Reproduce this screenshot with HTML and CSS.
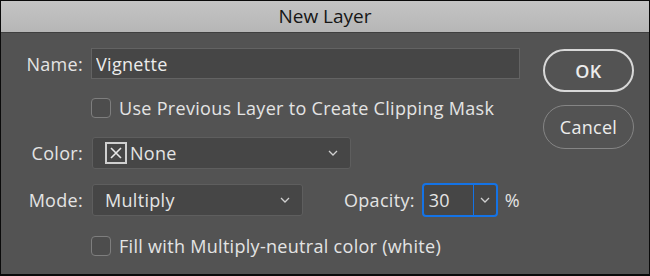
FILE: index.html
```html
<!DOCTYPE html>
<html lang="en">
<head>
    <meta charset="UTF-8">
    <title>New Layer</title>
    <link rel="stylesheet" href="styles.css">
</head>
<body>
    <div class="dialog">
        <div class="titlebar">New Layer</div>
        <div class="content">
            <div class="form">
                <div class="row row-name">
                    <label class="label">Name:</label>
                    <input type="text" class="field" value="Vignette">
                </div>
                <div class="row row-check">
                    <span class="label"></span>
                    <span class="check"><span class="box"></span>Use Previous Layer to Create Clipping Mask</span>
                </div>
                <div class="row row-color">
                    <label class="label">Color:</label>
                    <div class="select select-color">
                        <span class="swatch">
                            <svg width="16" height="16" viewBox="0 0 16 16"><path d="M3 3 L13 13 M13 3 L3 13" stroke="#e6e6e6" stroke-width="1.6" fill="none"/></svg>
                        </span>
                        <span class="select-text">None</span>
                        <svg class="chev" width="10" height="6" viewBox="0 0 10 6"><path d="M1 1 L5 5 L9 1" stroke="#d0d0d0" stroke-width="1.3" fill="none"/></svg>
                    </div>
                </div>
                <div class="row row-mode">
                    <label class="label">Mode:</label>
                    <div class="select select-mode">
                        <span class="select-text">Multiply</span>
                        <svg class="chev" width="10" height="6" viewBox="0 0 10 6"><path d="M1 1 L5 5 L9 1" stroke="#d0d0d0" stroke-width="1.3" fill="none"/></svg>
                    </div>
                    <label class="label-opacity">Opacity:</label>
                    <div class="combo">
                        <span class="combo-value">30</span>
                        <span class="combo-btn">
                            <svg width="10" height="6" viewBox="0 0 10 6"><path d="M1 1 L5 5 L9 1" stroke="#d0d0d0" stroke-width="1.3" fill="none"/></svg>
                        </span>
                    </div>
                    <span class="percent">%</span>
                </div>
                <div class="row row-fill">
                    <span class="label"></span>
                    <span class="check"><span class="box"></span>Fill with Multiply-neutral color (white)</span>
                </div>
            </div>
            <div class="buttons">
                <button class="btn btn-ok">OK</button>
                <button class="btn btn-cancel">Cancel</button>
            </div>
        </div>
    </div>
</body>
</html>
```

FILE: styles.css
```css
body {
    margin: 0;
    background: #000;
    font-family: "Open Sans", "Liberation Sans", sans-serif;
}
.dialog {
    width: 650px;
    height: 276px;
    box-sizing: border-box;
    border: 1px solid #0a0a0a;
    border-bottom-width: 2px;
    background: #535353;
    color: #e4e4e4;
    display: flex;
    flex-direction: column;
    font-size: 18px;
    letter-spacing: 0.3px;
}
.titlebar {
    height: 31px;
    line-height: 31px;
    text-align: center;
    font-size: 19px;
    letter-spacing: 0;
    color: #161616;
    background: linear-gradient(#c4c4c4, #b6b6b6);
    border-bottom: 1px solid #3f3f3f;
}
.content {
    display: flex;
    padding-top: 15px;
}
.form {
    width: 519px;
}
.row {
    display: flex;
    align-items: center;
}
.label {
    width: 82px;
    margin-right: 8px;
    text-align: right;
}
.field {
    width: 429px;
    height: 31px;
    box-sizing: border-box;
    background: #464646;
    border: 1px solid #636363;
    color: #ececec;
    font: inherit;
    letter-spacing: inherit;
    padding: 0 4px;
    outline: none;
}
.row-check {
    margin-top: 19px;
    height: 20px;
}
.check {
    display: flex;
    align-items: center;
}
.box {
    width: 20px;
    height: 20px;
    box-sizing: border-box;
    border: 1px solid #7e7e7e;
    border-radius: 4px;
    background: #4d4d4d;
    margin-right: 8px;
}
.row-color {
    margin-top: 19px;
}
.select {
    height: 32px;
    box-sizing: border-box;
    background: #464646;
    border: 1px solid #5e5e5e;
    border-radius: 3px;
    display: flex;
    align-items: center;
    margin-left: 1px;
}
.select-color {
    width: 259px;
    padding-left: 12px;
}
.swatch {
    width: 22px;
    height: 22px;
    box-sizing: border-box;
    border: 2px solid #cfcfcf;
    display: flex;
    align-items: center;
    justify-content: center;
    margin-right: 3px;
}
.select-text {
    flex: 1;
}
.chev {
    margin-right: 12px;
}
.row-mode {
    margin-top: 14px;
}
.select-mode {
    width: 211px;
    padding-left: 12px;
}
.label-opacity {
    margin-left: 41px;
    margin-right: 7px;
}
.combo {
    width: 76px;
    height: 34px;
    box-sizing: border-box;
    border: 2px solid #1473e6;
    border-radius: 4px;
    background: #464646;
    display: flex;
    align-items: stretch;
}
.combo-value {
    width: 50px;
    border-right: 1px solid #1473e6;
    display: flex;
    align-items: center;
    padding-left: 5px;
    box-sizing: border-box;
}
.combo-btn {
    flex: 1;
    display: flex;
    align-items: center;
    justify-content: center;
}
.percent {
    margin-left: 7px;
}
.row-fill {
    margin-top: 18px;
    height: 21px;
}
.buttons {
    margin-left: 23px;
    display: flex;
    flex-direction: column;
    gap: 13px;
    margin-top: 1px;
}
.btn {
    width: 91px;
    height: 43px;
    border-radius: 22px;
    background: transparent;
    color: #ececec;
    font-family: inherit;
    font-size: 18px;
    letter-spacing: 0.3px;
    padding: 0;
}
.btn-ok {
    border: 2px solid #d8d8d8;
    font-weight: 600;
}
.btn-cancel {
    height: 44px;
    border: 1.5px solid #858585;
}
```
